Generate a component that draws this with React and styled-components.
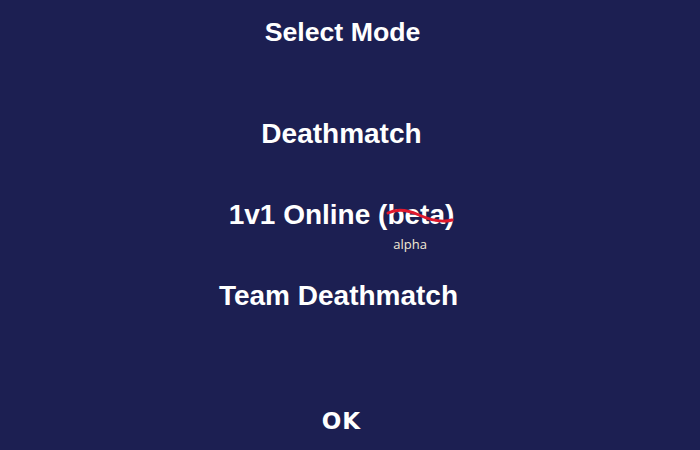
import React from "react";
import styled, { createGlobalStyle } from "styled-components";

const Global = createGlobalStyle`
  html, body { margin: 0; padding: 0; background: #1c1f52; }
  #root { width: 700px; height: 450px; }
`;

const Screen = styled.div`
  box-sizing: border-box;
  width: 700px;
  height: 450px;
  padding-right: 17px;
  background: #1c1f52;
  display: flex;
  flex-direction: column;
  align-items: center;
  font-family: "Liberation Sans", Arial, sans-serif;
  color: #ffffff;
`;

const Title = styled.h1`
  margin: 15px 0 0 2px;
  height: 34px;
  line-height: 34px;
  font-size: 26.7px;
  font-weight: bold;
`;

const Menu = styled.div`
  margin-top: 69px;
  display: flex;
  flex-direction: column;
  align-items: center;
  gap: 49px;
`;

const Option = styled.div`
  position: relative;
  height: 32px;
  line-height: 32px;
  font-size: 28px;
  font-weight: bold;
  white-space: nowrap;
  margin-right: ${(p) => p.$shift || 0}px;
`;

const Struck = styled.span`
  position: relative;
  display: inline-block;
`;

const Wave = styled.svg`
  position: absolute;
  left: -1px;
  top: 9px;
  width: 68px;
  height: 16px;
  overflow: visible;
`;

const Note = styled.span`
  position: absolute;
  left: 50%;
  top: 38px;
  transform: translateX(calc(-50% - 6px));
  font-family: "Open Sans", "Noto Sans", sans-serif;
  font-size: 13px;
  font-weight: normal;
  line-height: 14px;
  color: #f3ead4;
`;

const Spacer = styled.div`
  flex: 1;
`;

const OkButton = styled.div`
  margin-bottom: 16px;
  font-family: "DejaVu Sans", Verdana, sans-serif;
  font-weight: bold;
  font-size: 23px;
  line-height: 26px;
  letter-spacing: 1px;
`;

export default function App() {
  return (
    <>
      <Global />
      <Screen>
        <Title>Select Mode</Title>
        <Menu>
          <Option>Deathmatch</Option>
          <Option>
            1v1 Online (
            <Struck>
              beta
              <Wave viewBox="0 0 68 16">
                <path
                  d="M2 5 C 12 0, 22 2, 33 7 S 55 15, 66 12"
                  fill="none"
                  stroke="#e0182d"
                  strokeWidth="3"
                  strokeLinecap="round"
                />
              </Wave>
              <Note>alpha</Note>
            </Struck>
            )
          </Option>
          <Option $shift={6}>Team Deathmatch</Option>
        </Menu>
        <Spacer />
        <OkButton>OK</OkButton>
      </Screen>
    </>
  );
}
